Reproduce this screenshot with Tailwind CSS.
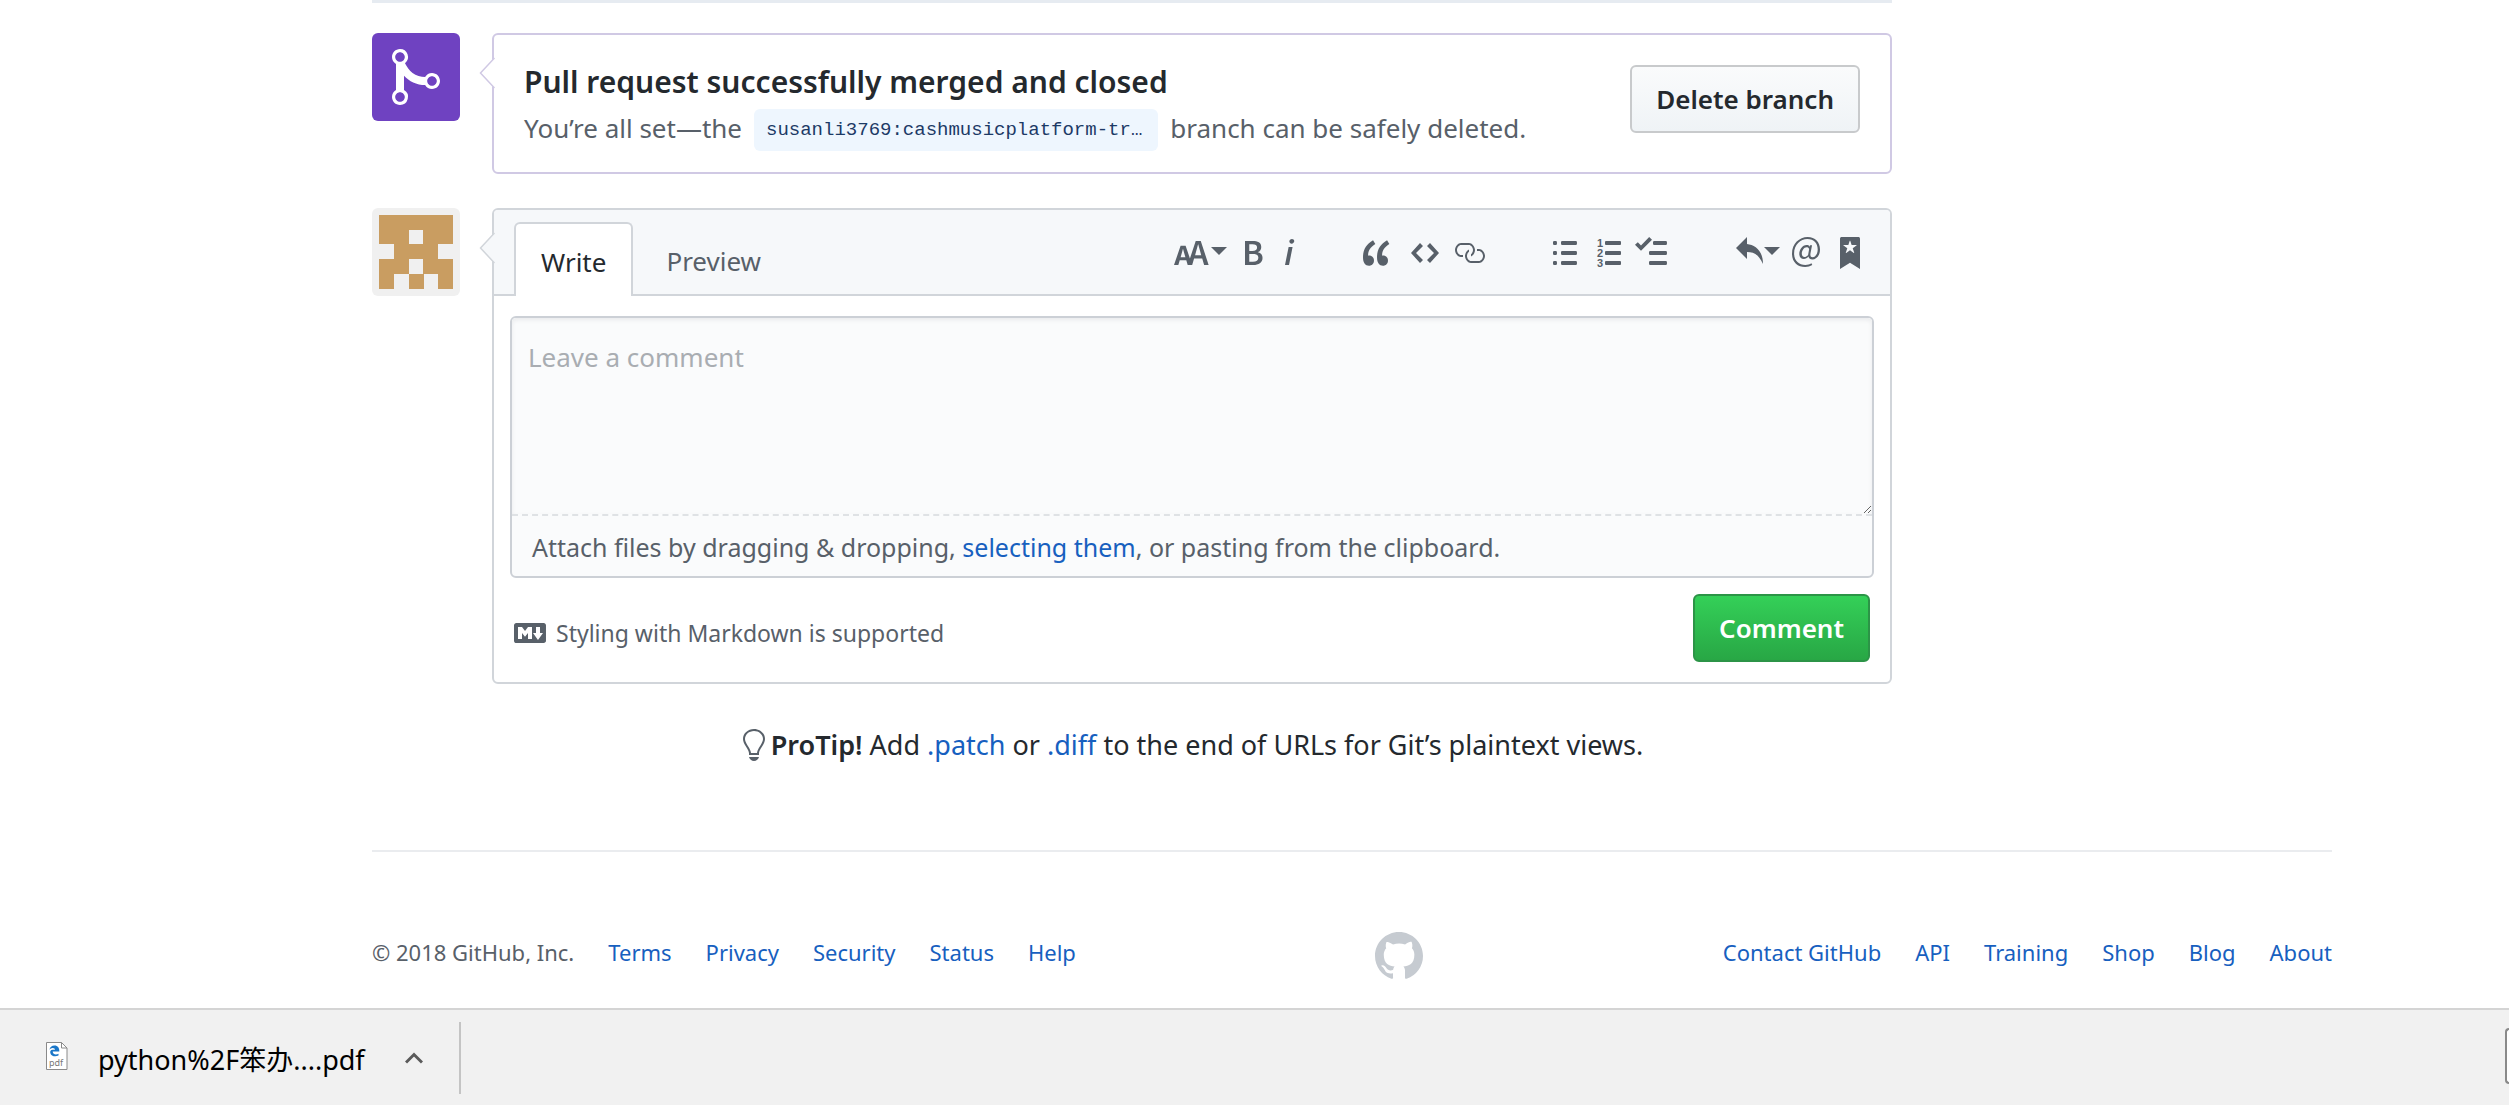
<!DOCTYPE html>
<html lang="en">
<head>
<meta charset="utf-8">
<meta name="viewport" content="width=device-width, initial-scale=1">
<title>Pull request · GitHub</title>
<script src="https://cdn.jsdelivr.net/npm/@tailwindcss/browser@4"></script>
</head>
<body class="flex min-h-screen flex-col bg-white font-['Noto_Sans','Noto_Sans_CJK_SC',sans-serif] text-[26px] leading-[42px] text-[#24292e]">

<div class="pr-[177px] pl-[372px]">
  <main class="mr-[440px]">
    <div class="h-[3px] bg-[#e6ebf1]"></div>

    <!-- Merge status -->
    <section class="mt-[30px] flex items-start gap-8">
      <div class="flex size-[88px] shrink-0 items-center justify-center rounded-md bg-[#6f42c1] text-white">
        <svg class="h-16 w-12" viewBox="0 0 12 16" fill="currentColor" aria-hidden="true"><path d="M10 7c-.73 0-1.38.41-1.73 1.02V8C7.22 7.98 6 7.64 5.14 6.98c-.75-.58-1.5-1.61-1.89-2.44A1.993 1.993 0 0 0 2 .99C.89.99 0 1.89 0 3a2 2 0 0 0 1 1.72v6.56c-.59.35-1 .99-1 1.72 0 1.11.89 2 2 2a1.993 1.993 0 0 0 1-3.72V7.67c.67.7 1.44 1.27 2.3 1.69.86.42 2.03.63 2.97.64v-.02c.36.61 1 1.02 1.73 1.02 1.11 0 2-.89 2-2 0-1.11-.89-2-2-2zm-6.8 6c0 .66-.55 1.2-1.2 1.2-.65 0-1.2-.55-1.2-1.2 0-.65.55-1.2 1.2-1.2.65 0 1.2.55 1.2 1.2zm0-10c0 .66-.55 1.2-1.2 1.2-.65 0-1.2-.55-1.2-1.2 0-.65.55-1.2 1.2-1.2.65 0 1.2.55 1.2 1.2zm6.8 7.2c-.65 0-1.2-.55-1.2-1.2 0-.65.55-1.2 1.2-1.2.65 0 1.2.55 1.2 1.2 0 .65-.55 1.2-1.2 1.2z"/></svg>
      </div>
      <div class="relative flex min-w-0 flex-1 items-start justify-between rounded-md border-2 border-[#d0c9e4] px-[30px] pt-[30px] pb-[21px]">
        <svg class="absolute top-[22px] -left-[15px] h-8 w-4" viewBox="0 0 16 32" aria-hidden="true"><path d="M15.500 1L1.500 16l14 15" fill="#fff" stroke="#d0c9e4" stroke-width="1.500"/></svg>
        <div>
          <h3 class="text-[30px] leading-[34px] font-semibold">Pull request successfully merged and closed</h3>
          <p class="mt-2.5 flex items-start gap-3 leading-[38px] text-[#586069]"><span>You’re all set—the</span><code class="rounded-md bg-[#eef6fe] pr-4 pl-3 font-['Liberation_Mono',monospace] text-[19px] leading-[42px] text-[#1c3a66]">susanli3769:cashmusicplatform-tr…</code><span>branch can be safely deleted.</span></p>
        </div>
        <button type="button" class="h-[68px] rounded-md border-2 border-[#c8cacc] bg-linear-to-b from-[#fafbfc] to-[#eff3f6] px-6 font-semibold">Delete branch</button>
      </div>
    </section>

    <!-- New comment -->
    <section class="mt-[34px] flex items-start gap-8">
      <svg class="size-[88px] shrink-0 rounded-md bg-[#f0f0f0]" viewBox="0 0 88 88" fill="#c99d61" shape-rendering="crispEdges" aria-label="Avatar"><path d="M7 7h74v29h-15v15h15v30h-15v-15h-14v15h-15v-15h-15v15H7V51h15V36H7zM37 22v14h14V22zM37 51v15h14V51z" fill-rule="evenodd"/></svg>
      <form class="relative min-w-0 flex-1 rounded-md border-2 border-[#d1d5da]">
        <div class="flex h-[86px] justify-between rounded-t-[4px] border-b-2 border-[#d1d5da] bg-[#f6f8fa] pr-[30px] pl-5">
          <div class="mt-3 -mb-0.5 flex items-stretch" role="tablist">
            <button type="button" role="tab" aria-selected="true" class="rounded-t-md border-2 border-b-0 border-[#d1d5da] bg-white px-[25px] pt-1">Write</button>
            <button type="button" role="tab" class="px-[33px] pt-1 text-[#586069]">Preview</button>
          </div>
          <div class="flex items-start gap-[68px] pt-[27px] text-[#586069]">
            <div class="flex gap-3">
              <button type="button" aria-label="Header text" class="flex gap-px pr-1">
                <svg class="h-8 w-9" viewBox="0 0 18 16" fill="currentColor"><path d="M13.620 9.080L12.100 3.660h-.06l-1.500 5.420h3.080zM5.700 10.130S4.680 6.520 4.530 6.020h-.08l-1.130 4.110H5.700zM17.310 14h-2.250l-.95-3.250h-4.070L9.090 14H6.840l-.69-2.330H2.870L2.170 14H0l3.300-9.590h2.500l2.170 6.340L10.860 2h2.520l3.940 12h-.01z"/></svg>
                <svg class="h-8 w-4" viewBox="0 0 8 16" fill="currentColor"><path d="M0 5h8L4 9z"/></svg>
              </button>
              <button type="button" aria-label="Bold" class="pr-2"><svg class="h-8 w-5" viewBox="0 0 10 16" fill="currentColor"><path d="M1 2h3.830c2.480 0 4.300.75 4.300 2.950 0 1.140-.63 2.230-1.670 2.610v.06c1.330.3 2.300 1.230 2.300 2.860 0 2.390-1.970 3.520-4.610 3.520H1V2zm3.660 4.950c1.670 0 2.380-.66 2.380-1.690 0-1.170-.78-1.610-2.340-1.610H3.130v3.300h1.530zm.27 5.390c1.770 0 2.750-.64 2.750-1.980 0-1.270-.95-1.810-2.750-1.810h-1.800v3.800h1.800v-.01z"/></svg></button>
              <button type="button" aria-label="Italic"><svg class="h-8 w-3" viewBox="0 0 6 16" fill="currentColor"><path d="M2.810 5h1.980L3 14H1l1.810-9zm.36-2.700c0-.7.58-1.300 1.330-1.300.56 0 1.130.38 1.130 1.030 0 .75-.59 1.300-1.330 1.300-.58 0-1.130-.38-1.130-1.030z"/></svg></button>
            </div>
            <div class="flex gap-3">
              <button type="button" aria-label="Quote" class="pr-2"><svg class="h-8 w-7" viewBox="0 0 14 16" fill="currentColor"><path d="M6.160 3.500C3.730 5.060 2.550 6.670 2.550 9.360c.16-.05.3-.05.44-.05 1.270 0 2.500.86 2.500 2.410 0 1.610-1.030 2.610-2.500 2.610-1.900 0-2.990-1.520-2.990-4.250 0-3.800 1.750-6.530 5.020-8.420L6.160 3.500zm7 0c-2.430 1.560-3.610 3.170-3.610 5.860.16-.05.3-.05.44-.05 1.270 0 2.500.86 2.500 2.410 0 1.610-1.030 2.610-2.500 2.610-1.890 0-2.980-1.520-2.980-4.250 0-3.800 1.750-6.530 5.020-8.420l1.140 1.840h-.01z"/></svg></button>
              <button type="button" aria-label="Code" class="pr-0.5"><svg class="h-8 w-7" viewBox="0 0 14 16" fill="currentColor"><path d="M9.500 3L8 4.500 11.500 8 8 11.500 9.500 13 14 8 9.500 3zm-5 0L0 8l4.500 5L6 11.500 2.500 8 6 4.500 4.500 3z"/></svg></button>
              <button type="button" aria-label="Link"><svg class="h-8 w-8" viewBox="0 0 16 16" fill="currentColor"><path d="M4 9h1v1H4c-1.500 0-3-1.690-3-3.500S2.550 3 4 3h4c1.450 0 3 1.690 3 3.500 0 1.410-.91 2.720-2 3.250V8.590c.58-.45 1-1.270 1-2.090C10 5.220 8.980 4 8 4H4c-.98 0-2 1.220-2 2.500S3 9 4 9zm9-3h-1v1h1c1 0 2 1.220 2 2.500S13.980 12 13 12H9c-.98 0-2-1.220-2-2.500 0-.83.42-1.640 1-2.090V6.250c-1.090.53-2 1.840-2 3.250C6 11.310 7.550 13 9 13h4c1.450 0 3-1.690 3-3.500S14.500 6 13 6z"/></svg></button>
            </div>
            <div class="flex gap-3">
              <button type="button" aria-label="Bulleted list" class="pr-2"><svg class="h-8 w-6" viewBox="0 0 12 16" fill="currentColor"><path d="M2 13c0 .59 0 1-.59 1H.59C0 14 0 13.590 0 13c0-.59 0-1 .59-1h.81c.59 0 .59.41.59 1H2zm2.590-9h6.810c.59 0 .59-.41.59-1 0-.59 0-1-.59-1H4.590C4 2 4 2.410 4 3c0 .59 0 1 .59 1zM1.410 7H.59C0 7 0 7.410 0 8c0 .59 0 1 .59 1h.81c.59 0 .59-.41.59-1 0-.59 0-1-.59-1h.01zm0-5H.59C0 2 0 2.410 0 3c0 .59 0 1 .59 1h.81c.59 0 .59-.41.59-1 0-.59 0-1-.59-1h.01zm10 5H4.590C4 7 4 7.410 4 8c0 .59 0 1 .59 1h6.810c.59 0 .59-.41.59-1 0-.59 0-1-.59-1h.01zm0 5H4.590C4 12 4 12.410 4 13c0 .59 0 1 .59 1h6.810c.59 0 .59-.41.59-1 0-.59 0-1-.59-1h.01z"/></svg></button>
              <button type="button" aria-label="Numbered list" class="pr-0.5"><svg class="h-8 w-6 overflow-visible" viewBox="0 0 24 32" fill="currentColor"><rect x="8" y="4" width="16" height="4" rx="1"/><rect x="8" y="14" width="16" height="4" rx="1"/><rect x="8" y="24" width="16" height="4" rx="1"/><g font-family="Liberation Sans" font-weight="700" font-size="11"><text x="0" y="10">1</text><text x="0" y="20">2</text><text x="0" y="30">3</text></g></svg></button>
              <button type="button" aria-label="Task list"><svg class="h-8 w-8" viewBox="0 0 16 16" fill="currentColor"><path d="M15.410 9H7.590C7 9 7 8.590 7 8c0-.59 0-1 .59-1h7.810c.59 0 .59.41.59 1 0 .59 0 1-.59 1h.01zM9.590 4C9 4 9 3.590 9 3c0-.59 0-1 .59-1h5.810c.59 0 .59.41.59 1 0 .59 0 1-.59 1H9.590zM0 3.910l1.410-1.300L3 4.200 7.090 0 8.500 1.410 3 6.910l-3-3zM7.590 12h7.810c.59 0 .59.41.59 1 0 .59 0 1-.59 1H7.590C7 14 7 13.590 7 13c0-.59 0-1 .59-1z"/></svg></button>
            </div>
            <div class="flex gap-3">
              <button type="button" aria-label="Saved replies" class="flex gap-px">
                <svg class="h-8 w-7" viewBox="0 0 14 16" fill="currentColor"><path d="M6 3.500c3.920.44 8 3.125 8 10-2.312-5.062-4.750-6-8-6V11L.5 5.500 6 0v3.500z"/></svg>
                <svg class="h-8 w-4" viewBox="0 0 8 16" fill="currentColor"><path d="M0 5h8L4 9z"/></svg>
              </button>
              <button type="button" aria-label="Mention" class="pr-2"><svg class="h-8 w-7" viewBox="0 0 14 16" fill="currentColor"><path d="M6.580 15c1.250 0 2.520-.31 3.560-.94l-.42-.94c-.84.52-1.890.83-3.030.83-3.230 0-5.640-2.080-5.640-5.720 0-4.370 3.230-7.180 6.580-7.180 3.450 0 5.220 2.190 5.220 5.200 0 2.390-1.340 3.860-2.500 3.860-1.050 0-1.360-.73-1.050-2.190l.73-3.750H8.980l-.11.72c-.41-.63-.94-.83-1.560-.83-2.190 0-3.660 2.390-3.660 4.380 0 1.670.94 2.610 2.300 2.610.84 0 1.670-.53 2.300-1.250.11.94.94 1.450 1.980 1.450 1.670 0 3.770-1.670 3.770-5C14 2.610 11.590 0 7.830 0 3.660 0 0 3.330 0 8.330 0 12.710 2.920 15 6.580 15zm-.31-5c-.73 0-1.360-.52-1.360-1.670 0-1.450.94-3.220 2.410-3.220.52 0 .84.2 1.250.83l-.52 3.020c-.63.73-1.250 1.050-1.780 1.050V10z"/></svg></button>
              <button type="button" aria-label="Bookmark"><svg class="h-8 w-5" viewBox="0 0 10 16" fill="currentColor"><path d="M9 0H1C.27 0 0 .27 0 1v15l5-3.090L10 16V1c0-.73-.27-1-1-1zm-.78 4.250L6.360 5.610l.72 2.160c.06.22-.02.28-.2.17L5 6.600 3.120 7.940c-.19.11-.25.05-.2-.17l.72-2.160-1.860-1.360c-.17-.16-.14-.23.09-.23l2.300-.03.7-2.160h.25l.7 2.160 2.300.03c.23 0 .27.08.09.23h.01z"/></svg></button>
            </div>
          </div>
        </div>
        <svg class="absolute top-[22px] -left-[15px] h-8 w-4" viewBox="0 0 16 32" aria-hidden="true"><path d="M15.500 1L1.500 16l14 15" fill="#f6f8fa" stroke="#d1d5da" stroke-width="1.500"/></svg>

        <div class="mx-4 mt-[20px] rounded-md border-2 border-[#ccd0d6] bg-[#fafbfc]">
          <textarea aria-label="Comment" placeholder="Leave a comment" class="block h-[198px] w-full resize-y rounded-t-[4px] border-b-2 border-dashed border-[#dfe2e5] bg-[#fafbfc] px-4 pt-[18px] leading-[42px] shadow-[inset_0_2px_4px_rgba(27,31,35,0.075)] placeholder:text-[#a9adb2]"></textarea>
          <p class="px-5 pt-2.5 pb-2 text-[25px] text-[#586069]">Attach files by dragging &amp; dropping, <a href="#" class="text-[#1760bf]">selecting them</a>, or pasting from the clipboard.</p>
        </div>

        <div class="flex items-center justify-between px-5 pt-4 pb-5">
          <a href="#" class="flex items-center gap-2.5 pt-2.5 text-[23px] text-[#586069]">
            <svg class="size-8" viewBox="0 0 16 16" fill="currentColor" aria-hidden="true"><path fill-rule="evenodd" d="M14.850 3H1.150C.52 3 0 3.520 0 4.150v7.690C0 12.480.52 13 1.150 13h13.690c.64 0 1.150-.52 1.150-1.150v-7.700C16 3.520 15.480 3 14.850 3zM9 11H7V8L5.500 9.920 4 8v3H2V5h2l1.500 2L7 5h2v6zm2.990.5L9.500 8H11V5h2v3h1.500l-2.510 3.500z"/></svg>
            Styling with Markdown is supported
          </a>
          <button type="submit" class="h-[68px] rounded-md border-2 border-[#2c9447] bg-linear-to-b from-[#34d058] to-[#28a745] px-6 font-semibold text-white">Comment</button>
        </div>
      </form>
    </section>

    <p class="mt-10 ml-[120px] flex items-center justify-center gap-1 text-[27px]">
      <svg class="h-8 w-[26px] text-[#586069]" viewBox="0 0 13 16" fill="currentColor" aria-hidden="true"><path fill-rule="evenodd" d="M6.500 0C3.480 0 1 2.190 1 5c0 .92.55 2.250 1 3 1.340 2.250 1.780 2.780 2 4v1h5v-1c.22-1.220.66-1.750 2-4 .45-.75 1-2.080 1-3 0-2.810-2.480-5-5.500-5zm3.640 7.480c-.25.44-.47.8-.67 1.110-.86 1.410-1.250 2.060-1.450 3.230-.02.05-.02.11-.02.17H5c0-.06 0-.13-.02-.17-.2-1.170-.59-1.830-1.450-3.230-.2-.31-.42-.67-.67-1.110C2.440 6.780 2 5.650 2 5c0-2.200 2.020-4 4.500-4 1.220 0 2.360.42 3.220 1.190C10.550 2.940 11 3.940 11 5c0 .66-.44 1.780-.86 2.480zM4 14h5c-.23 1.140-1.300 2-2.500 2s-2.270-.86-2.500-2z"/></svg>
      <span><strong class="font-semibold">ProTip!</strong> Add <a href="#" class="text-[#1760bf]">.patch</a> or <a href="#" class="text-[#1760bf]">.diff</a> to the end of URLs for Git’s plaintext views.</span>
    </p>
  </main>

  <footer class="mt-[84px] flex items-start justify-between border-t-2 border-[#eaecef] pt-20 text-[22px] leading-10 text-[#586069]">
    <ul class="flex gap-[34px]">
      <li>© 2018 GitHub, Inc.</li>
      <li><a href="#" class="text-[#1760bf]">Terms</a></li>
      <li><a href="#" class="text-[#1760bf]">Privacy</a></li>
      <li><a href="#" class="text-[#1760bf]">Security</a></li>
      <li><a href="#" class="text-[#1760bf]">Status</a></li>
      <li><a href="#" class="text-[#1760bf]">Help</a></li>
    </ul>
    <a href="#" aria-label="GitHub" class="text-[#c6cbd1]"><svg class="size-12" viewBox="0 0 16 16" fill="currentColor"><path fill-rule="evenodd" d="M8 0C3.580 0 0 3.580 0 8c0 3.540 2.290 6.530 5.470 7.590.4.07.55-.17.55-.38 0-.19-.01-.82-.01-1.490-2.010.37-2.530-.49-2.690-.94-.09-.23-.48-.94-.82-1.130-.28-.15-.68-.52-.01-.53.63-.01 1.080.58 1.230.82.72 1.210 1.870.87 2.330.66.07-.52.28-.87.51-1.070-1.780-.2-3.640-.89-3.640-3.950 0-.87.31-1.590.82-2.150-.08-.2-.36-1.020.08-2.120 0 0 .67-.21 2.200.82.64-.18 1.320-.27 2-.27.68 0 1.360.09 2 .27 1.530-1.040 2.200-.82 2.200-.82.44 1.100.16 1.920.08 2.120.51.56.82 1.270.82 2.150 0 3.070-1.870 3.750-3.650 3.950.29.25.54.73.54 1.480 0 1.070-.01 1.930-.01 2.200 0 .21.15.46.55.38A8.013 8.013 0 0 0 16 8c0-4.420-3.580-8-8-8z"/></svg></a>
    <ul class="flex gap-[34px]">
      <li><a href="#" class="text-[#1760bf]">Contact GitHub</a></li>
      <li><a href="#" class="text-[#1760bf]">API</a></li>
      <li><a href="#" class="text-[#1760bf]">Training</a></li>
      <li><a href="#" class="text-[#1760bf]">Shop</a></li>
      <li><a href="#" class="text-[#1760bf]">Blog</a></li>
      <li><a href="#" class="text-[#1760bf]">About</a></li>
    </ul>
  </footer>
</div>

<!-- Browser download shelf -->
<aside class="mt-auto flex h-[97px] items-start justify-between overflow-hidden border-t-2 border-[#d4d4d4] bg-[#f1f1f1] pt-3 text-black">
  <div class="flex h-[72px] items-center border-r-2 border-[#c4c4c4] pr-9 pl-[46px]">
    <svg class="mb-1 h-7 w-[22px]" viewBox="0 0 22 28" aria-hidden="true"><path d="M.5.500h15l5.500 5.500v21.500H.5z" fill="#fff" stroke="#8a8a8a"/><path d="M15.500.500v5.500H21" fill="none" stroke="#8a8a8a"/><path d="M12.500 11.700c-2 1.200-5.800 1-5.800-2.200H13.300c.2-3.700-1.700-5.900-4.700-5.900-2.900 0-4.700 1.800-5.200 4.300C4.200 6.700 5.500 6 6.700 6c1.600 0 2.300 1 2.300 1.800H6.600C4.700 8 3.900 9.400 4.300 11c.7 3.300 5 4.200 8.200 2.600z" fill="#1a76c8"/><text x="3" y="24" font-family="Noto Sans" font-size="9" fill="#777">pdf</text></svg>
    <span class="ml-[30px] pt-1 text-[27px]">python%2F笨办....pdf</span>
    <button type="button" aria-label="Download options" class="ml-10"><svg class="h-3 w-[18px]" viewBox="0 0 18 12" fill="none" stroke="#5a5a5a" stroke-width="3"><path d="M1 10.500L9 2.500l8 8"/></svg></button>
  </div>
  <button type="button" aria-label="Show all" class="mt-1.5 h-14 w-1 rounded-l-md border-2 border-r-0 border-[#8a8a8a] bg-white"></button>
</aside>
</body>
</html>
